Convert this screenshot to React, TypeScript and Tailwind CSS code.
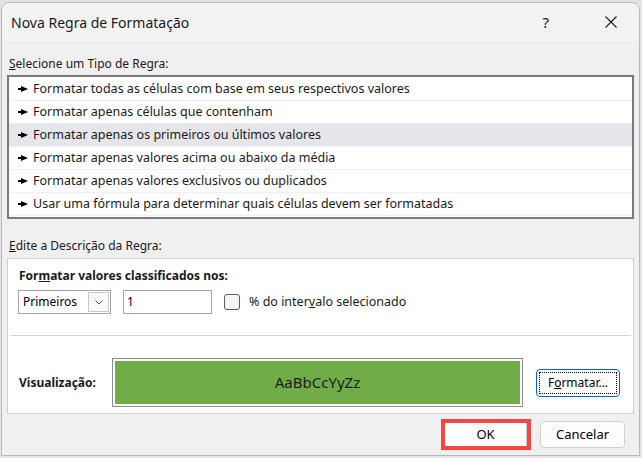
import { useState } from 'react'

const regras = [
  'Formatar todas as células com base em seus respectivos valores',
  'Formatar apenas células que contenham',
  'Formatar apenas os primeiros ou últimos valores',
  'Formatar apenas valores acima ou abaixo da média',
  'Formatar apenas valores exclusivos ou duplicados',
  'Usar uma fórmula para determinar quais células devem ser formatadas',
]

function Seta() {
  return (
    <svg width="10" height="6" viewBox="0 0 10 6" className="shrink-0">
      <rect x="0" y="2" width="4" height="2" fill="#000" />
      <polygon points="3,0 10,3 3,6" fill="#000" />
    </svg>
  )
}

export default function App() {
  const [selecionada, setSelecionada] = useState(2)

  return (
    <div className="h-[458px] w-[642px] overflow-hidden bg-[#e4e4e4] pl-[1px] pt-[2px] font-['Noto_Sans',sans-serif] text-[12px] text-black">
      <div className="flex h-[454px] w-[639px] flex-col overflow-hidden rounded-t-[8px] border border-[#b9b9b9] bg-[#f0f0f0]">
        {/* Barra de título */}
        <div className="flex h-[38px] shrink-0 items-center bg-[#f3f3f3] pl-[9px]">
          <span className="text-[14px] text-[#1a1a1a]">Nova Regra de Formatação</span>
          <span className="ml-auto mr-[56px] text-[15px] text-[#1a1a1a]">?</span>
          <svg width="12" height="12" viewBox="0 0 12 12" className="mr-[22px]">
            <path d="M0.5 0.5 L11.5 11.5 M11.5 0.5 L0.5 11.5" stroke="#1a1a1a" strokeWidth="1.1" />
          </svg>
        </div>

        <div className="flex flex-1 flex-col px-[5px]">
          <div className="mt-[14px] pl-[2px] leading-[17px] text-[#1a1a1a]">
            <span className="underline">S</span>elecione um Tipo de Regra:
          </div>

          {/* Lista de tipos de regra */}
          <div className="mt-[3px] h-[144px] border-2 border-[#7a7a7a] bg-white pt-[1px]">
            {regras.map((r, i) => (
              <div
                key={r}
                onClick={() => setSelecionada(i)}
                className={`flex h-[23px] items-center gap-[5px] border-b border-[#f0f0f0] pl-[9px] ${
                  selecionada === i ? 'bg-[#e6e6ea]' : ''
                }`}
              >
                <Seta />
                <span className="text-[12.5px] text-[#1a1a1a]">{r}</span>
              </div>
            ))}
          </div>

          <div className="mt-[18px] pl-[2px] leading-[17px] text-[#1a1a1a]">
            <span className="underline">E</span>dite a Descrição da Regra:
          </div>

          {/* Descrição da regra */}
          <div className="mt-[4px] flex h-[156px] flex-col border border-[#cfcfcf] bg-white">
            <div className="mt-[8px] pl-[11px] font-bold leading-[17px] text-[#1a1a1a]">
              For<span className="underline">m</span>atar valores classificados nos:
            </div>

            <div className="mt-[6px] flex items-center pl-[10px]">
              <div className="flex h-[24px] w-[93px] items-center border border-[#a6a6a6] pl-[4px] pr-[1px]">
                <span>Primeiros</span>
                <div className="ml-auto flex h-[20px] w-[21px] items-center justify-center border border-[#c8c8c8] bg-[#fafafa]">
                  <svg width="8" height="5" viewBox="0 0 8 5">
                    <path d="M0.5 0.5 L4 4 L7.5 0.5" fill="none" stroke="#555" strokeWidth="1" />
                  </svg>
                </div>
              </div>
              <div className="ml-[12px] flex h-[24px] w-[89px] items-center border border-[#a6a6a6] pl-[3px]">1</div>
              <div className="ml-[12px] h-[16px] w-[16px] rounded-[3px] border border-[#5c5c5c] bg-[#f6f6f6]" />
              <span className="ml-[9px] text-[12.5px] text-[#1a1a1a]">
                % do inter<span className="underline">v</span>alo selecionado
              </span>
            </div>

            <div className="mx-[2px] mt-[21px] h-px bg-[#d4d4d4]" />

            <div className="mt-[22px] flex items-center pl-[11px]">
              <span className="w-[93px] font-bold text-[#1a1a1a]">Visualização:</span>
              <div className="flex h-[49px] w-[411px] border border-[#8c8c8c] p-[2px]">
                <div className="flex flex-1 items-center justify-center bg-[#70ad47] text-[15px] text-[#1a1a1a]">
                  AaBbCcYyZz
                </div>
              </div>
              <div className="ml-[13px] flex h-[28px] w-[84px] items-center justify-center rounded-[4px] border border-[#0067c0] bg-[#fdfdfd] p-[2px]">
                <div className="flex h-full w-full items-center justify-center border border-dotted border-black">
                  F<span className="underline">o</span>rmatar...
                </div>
              </div>
            </div>
          </div>

          {/* Botões */}
          <div className="mt-[5px] flex items-center justify-end pr-[9px]">
            <div className="flex h-[31px] w-[90px] items-center justify-center border-[4px] border-[#f54545] bg-white">
              <div className="flex h-full w-full items-center justify-center border-r border-[#cccccc] text-[13px]">OK</div>
            </div>
            <div className="ml-[9px] flex h-[27px] w-[85px] items-center justify-center rounded-[4px] border border-[#d0d0d0] bg-[#fdfdfd] text-[13px]">
              Cancelar
            </div>
          </div>
        </div>
      </div>
    </div>
  )
}
